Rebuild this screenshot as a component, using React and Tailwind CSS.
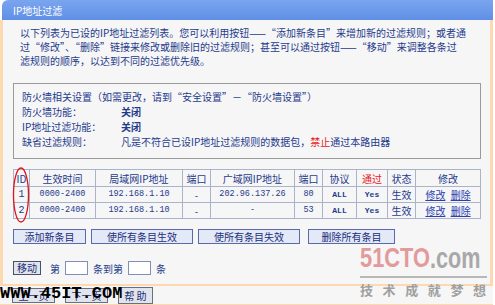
const cjk = { fontFamily: '"SimSun","Noto Sans CJK SC",sans-serif' };
const mono = { fontFamily: '"Liberation Mono","Noto Sans CJK SC",monospace' };
const logo = { fontFamily: '"Liberation Sans",Arial,sans-serif' };

const rows = [
  { id: "1", time: "0000-2400", lan: "192.168.1.10", lport: "-", wan: "202.96.137.26", wport: "80" },
  { id: "2", time: "0000-2400", lan: "192.168.1.10", lport: "-", wan: "-", wport: "53" },
];

function Btn({ children, w }) {
  return (
    <button
      className={`h-[15px] ${w} border border-[#5a6aa8] bg-[#e4e9f8] text-[10px] leading-[13px] text-[#1b2f78]`}
    >
      {children}
    </button>
  );
}

export default function App() {
  const th = "border border-[#a9b3c9] h-[17px] px-0 font-normal";
  const td = "border border-[#a9b3c9] h-[16px] text-center";
  return (
    <div className="relative h-[305px] w-[495px] overflow-hidden bg-white text-[10px] text-[#1f3b8c]" style={cjk}>
      <div className="ml-[2px] flex h-[20px] w-[491px] items-center rounded-tl-[6px] bg-gradient-to-b from-[#7aa5ee] to-[#5f8fe6] pl-[11px] text-[10px] text-white">
        IP地址过滤
      </div>
      <div className="w-[493px] border-x-[3px] border-[#fcd9b0] bg-[#f6f6f6] pb-[9px]">
        <div className="whitespace-nowrap pl-[17px] pt-[6px] leading-[14px]">
          <div>以下列表为已设的IP地址过滤列表。您可以利用按钮——“添加新条目”来增加新的过滤规则；或者通</div>
          <div>过“修改”、“删除”链接来修改或删除旧的过滤规则；甚至可以通过按钮——“移动”来调整各条过</div>
          <div>滤规则的顺序，以达到不同的过滤优先级。</div>
        </div>

        <div className="ml-[10px] mt-[15px] h-[76px] w-[468px] border border-[#9a9a9a] pl-[8px] pt-[5px] leading-[15px]">
          <div>防火墙相关设置（如需更改，请到“安全设置”－“防火墙设置”）</div>
          <div className="flex">
            <span className="w-[99px]">防火墙功能：</span>
            <span className="font-bold">关闭</span>
          </div>
          <div className="flex">
            <span className="w-[99px]">IP地址过滤功能：</span>
            <span className="font-bold">关闭</span>
          </div>
          <div className="flex">
            <span className="w-[99px]">缺省过滤规则：</span>
            <span>
              凡是不符合已设IP地址过滤规则的数据包，<span className="text-[#e8201c]">禁止</span>通过本路由器
            </span>
          </div>
        </div>

        <table className="ml-[10px] mt-[10px] w-[468px] border-collapse text-center">
          <thead>
            <tr>
              <th className={`${th} w-[16px]`}>ID</th>
              <th className={`${th} w-[66px]`}>生效时间</th>
              <th className={`${th} w-[87px]`}>局域网IP地址</th>
              <th className={`${th} w-[28px]`}>端口</th>
              <th className={`${th} w-[84px]`}>广域网IP地址</th>
              <th className={`${th} w-[28px]`}>端口</th>
              <th className={`${th} w-[34px]`}>协议</th>
              <th className={`${th} w-[31px] text-[#e8201c]`}>通过</th>
              <th className={`${th} w-[28px]`}>状态</th>
              <th className={th}>修改</th>
            </tr>
          </thead>
          <tbody>
            {rows.map((r) => (
              <tr key={r.id}>
                <td className={td} style={mono}>{r.id}</td>
                <td className={`${td} text-[8.5px]`} style={mono}>{r.time}</td>
                <td className={`${td} text-[8.5px]`} style={mono}>{r.lan}</td>
                <td className={td}>{r.lport}</td>
                <td className={`${td} text-[8.5px]`} style={mono}>{r.wan}</td>
                <td className={`${td} text-[8.5px]`} style={mono}>{r.wport}</td>
                <td className={`${td} text-[8px] font-bold`} style={mono}>ALL</td>
                <td className={`${td} text-[8px] font-bold`} style={mono}>Yes</td>
                <td className={td}>生效</td>
                <td className={td}>
                  <span className="text-[#2a3fb0] underline">修改</span>{" "}
                  <span className="ml-[3px] text-[#2a3fb0] underline">删除</span>
                </td>
              </tr>
            ))}
          </tbody>
        </table>

        <div className="ml-[10px] mt-[10px] flex gap-[5px]">
          <Btn w="w-[73px]">添加新条目</Btn>
          <Btn w="w-[102px]">使所有条目生效</Btn>
          <Btn w="w-[102px]">使所有条目失效</Btn>
          <Btn w="w-[87px] ml-[3px]">删除所有条目</Btn>
        </div>

        <div className="ml-[10px] mt-[17px] flex h-[14px] items-center">
          <button className="h-[14px] w-[28px] border border-[#4a4f6a] bg-[#e2e4ec] text-[10px] leading-[12px] text-[#1b2f78]">
            移动
          </button>
          <span className="ml-[9px]">第</span>
          <span className="ml-[5px] h-[14px] w-[23px] border border-[#7f8fb8] bg-white" />
          <span className="ml-[5px]">条到第</span>
          <span className="ml-[5px] h-[14px] w-[23px] border border-[#7f8fb8] bg-white" />
          <span className="ml-[5px]">条</span>
        </div>
      </div>

      <div className="h-[22px] w-[493px] border-y-2 border-[#fcd9b0] bg-[#f6f6f6]">
        <div className="ml-[12px] flex h-full items-center gap-[10px]">
          <button className="h-[15px] w-[43px] border border-[#6a6f80] bg-[#e2e4ec] text-[10px] leading-[13px] text-[#1b2f78]">
            上一页
          </button>
          <button className="h-[15px] w-[43px] border border-[#6a6f80] bg-[#e2e4ec] text-[10px] leading-[13px] text-[#1b2f78]">
            下一页
          </button>
          <button className="h-[17px] w-[35px] border border-[#6a6f80] bg-[#e2e4ec] text-[10px] leading-[15px] text-[#1b2f78]">
            帮 助
          </button>
        </div>
      </div>

      <svg className="absolute left-[11px] top-[166px]" width="20" height="58" viewBox="0 0 20 58">
        <ellipse cx="10" cy="29" rx="7.5" ry="27" fill="none" stroke="#e0121a" strokeWidth="1.3" />
      </svg>

      <div
        className="absolute left-[0px] top-[285px] text-[17px] font-bold leading-[17px] text-black"
        style={{ fontFamily: '"Liberation Mono",monospace' }}
      >
        WWW.45IT.COM
      </div>

      <div className="absolute left-[360px] top-[244px] w-[128px]">
        <div className="relative h-[28px]" style={logo}>
          <span className="absolute left-0 top-0 inline-block origin-top-left scale-x-[0.78] text-[28px] font-bold leading-[28px] text-[#e39a9c]">
            51CTO
          </span>
          <span className="absolute left-[70px] top-0 inline-block origin-top-left scale-x-[0.72] text-[30px] font-bold leading-[28px] text-[#a8a8a8]">
            .com
          </span>
        </div>
        <div className="mt-[4px] h-[2px] w-[127px] bg-[#b8b8b8]" />
        <div className="mt-[5px] flex justify-between pr-[2px] text-[13px] font-bold leading-[14px] text-[#a0a0a0]" style={cjk}>
          <span>技</span>
          <span>术</span>
          <span>成</span>
          <span>就</span>
          <span>梦</span>
          <span>想</span>
        </div>
      </div>
    </div>
  );
}
